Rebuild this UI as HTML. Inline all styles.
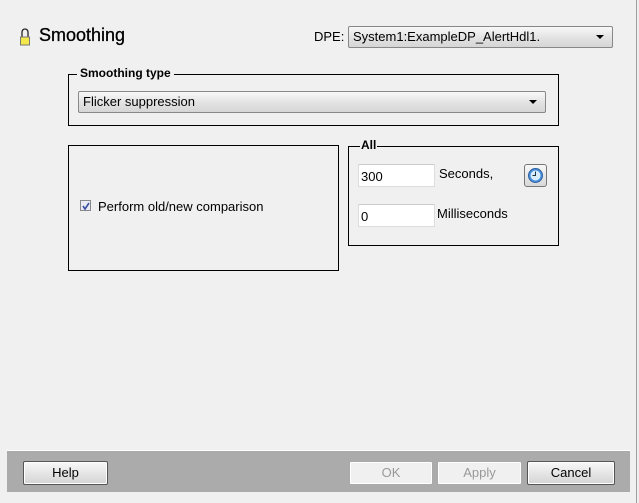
<!DOCTYPE html>
<html><head><style>
body{margin:0;width:639px;height:503px;background:#f0f0f0;position:relative;overflow:hidden;font-family:"Liberation Sans",sans-serif;font-size:13px;color:#000}
.a{position:absolute}
.box{position:absolute;border:1px solid #000;box-sizing:border-box}
.combo{position:absolute;box-sizing:border-box;border:1px solid #888;border-radius:2px;background:linear-gradient(#f8f8f8,#e2e2e2 55%,#d6d6d6);padding:2px 4px;font-size:13px}
.combo:after{content:"";position:absolute;right:8px;top:8px;border-left:4px solid transparent;border-right:4px solid transparent;border-top:4px solid #000}
.inp{position:absolute;box-sizing:border-box;background:#fff;border:1px solid #ddd;border-top-color:#ccc;padding:4px 2px 0;font-size:13px}
.btn{position:absolute;box-sizing:border-box;height:24px;top:461px;border:1px solid #555;border-radius:2px;background:linear-gradient(#f8f8f8,#e4e4e4 55%,#d4d4d4);text-align:center;line-height:22px;font-size:13px;box-shadow:inset 0 0 0 1px #fff}
.dis{border-color:#aaa;color:#999;background:#f0f0f0}
</style></head><body>
<svg class="a" style="left:19px;top:28px" width="12" height="18" viewBox="0 0 12 18"><path d="M3 9V4a3 3 0 0 1 6 0v5" fill="none" stroke="#222" stroke-width="1.3"/><rect x="1.5" y="9" width="9" height="8" fill="#f2e84a" stroke="#777"/></svg>
<div class="a" style="left:39px;top:25px;font-size:18px;-webkit-text-stroke:0.3px #000">Smoothing</div>
<div class="a" style="left:314px;top:29px;font-size:13px">DPE:</div>
<div class="combo" style="left:348px;top:26px;width:265px;height:22px;font-size:13px;padding-top:2px">System1:ExampleDP_AlertHdl1.</div>

<div class="box" style="left:68px;top:74px;width:491px;height:52px"></div>
<div class="a" style="left:77px;top:66px;background:#f0f0f0;padding:0 3px;font-weight:bold;font-size:12px">Smoothing type</div>
<div class="combo" style="left:78px;top:91px;width:468px;height:22px">Flicker suppression</div>

<div class="box" style="left:68px;top:145px;width:271px;height:126px"></div>
<div class="a" style="left:80px;top:200px;width:11px;height:11px;border:1px solid #888;background:#e8eaf6;box-sizing:border-box"></div>
<svg class="a" style="left:81px;top:201px" width="10" height="10"><path d="M2 5l2 3 4-6" fill="none" stroke="#3a4fa0" stroke-width="1.6"/></svg>
<div class="a" style="left:98px;top:199px">Perform old/new comparison</div>

<div class="box" style="left:348px;top:146px;width:211px;height:100px"></div>
<div class="a" style="left:360px;top:138px;background:#f0f0f0;padding:0 1px;font-weight:bold;font-size:12px">All</div>
<div class="inp" style="left:358px;top:164px;width:77px;height:23px">300</div>
<div class="a" style="left:439px;top:166px">Seconds,</div>
<div class="a" style="left:524px;top:164px;width:23px;height:23px;box-sizing:border-box;border:1px solid #777;border-radius:3px;background:linear-gradient(#f8f8f8,#d8d8d8)"></div>
<svg class="a" style="left:527px;top:167px" width="17" height="17"><circle cx="8.5" cy="8.5" r="7" fill="#4a90d9" stroke="#2a5ea0"/><circle cx="8.5" cy="8.5" r="5" fill="#d8ecff"/><path d="M8.5 4.5v4h-3" stroke="#234" fill="none"/></svg>
<div class="inp" style="left:358px;top:204px;width:77px;height:23px">0</div>
<div class="a" style="left:437px;top:206px">Milliseconds</div>

<div class="a" style="left:636px;top:0;width:1px;height:503px;background:#a0a0a0"></div>
<div class="a" style="left:7px;top:450px;width:623px;height:42px;background:#ababab;border-top:1px solid #fff;box-sizing:border-box"></div>
<div class="btn" style="left:23px;width:85px">Help</div>
<div class="btn dis" style="left:349px;width:84px">OK</div>
<div class="btn dis" style="left:437px;width:85px">Apply</div>
<div class="btn" style="left:527px;width:88px">Cancel</div>
</body></html>
